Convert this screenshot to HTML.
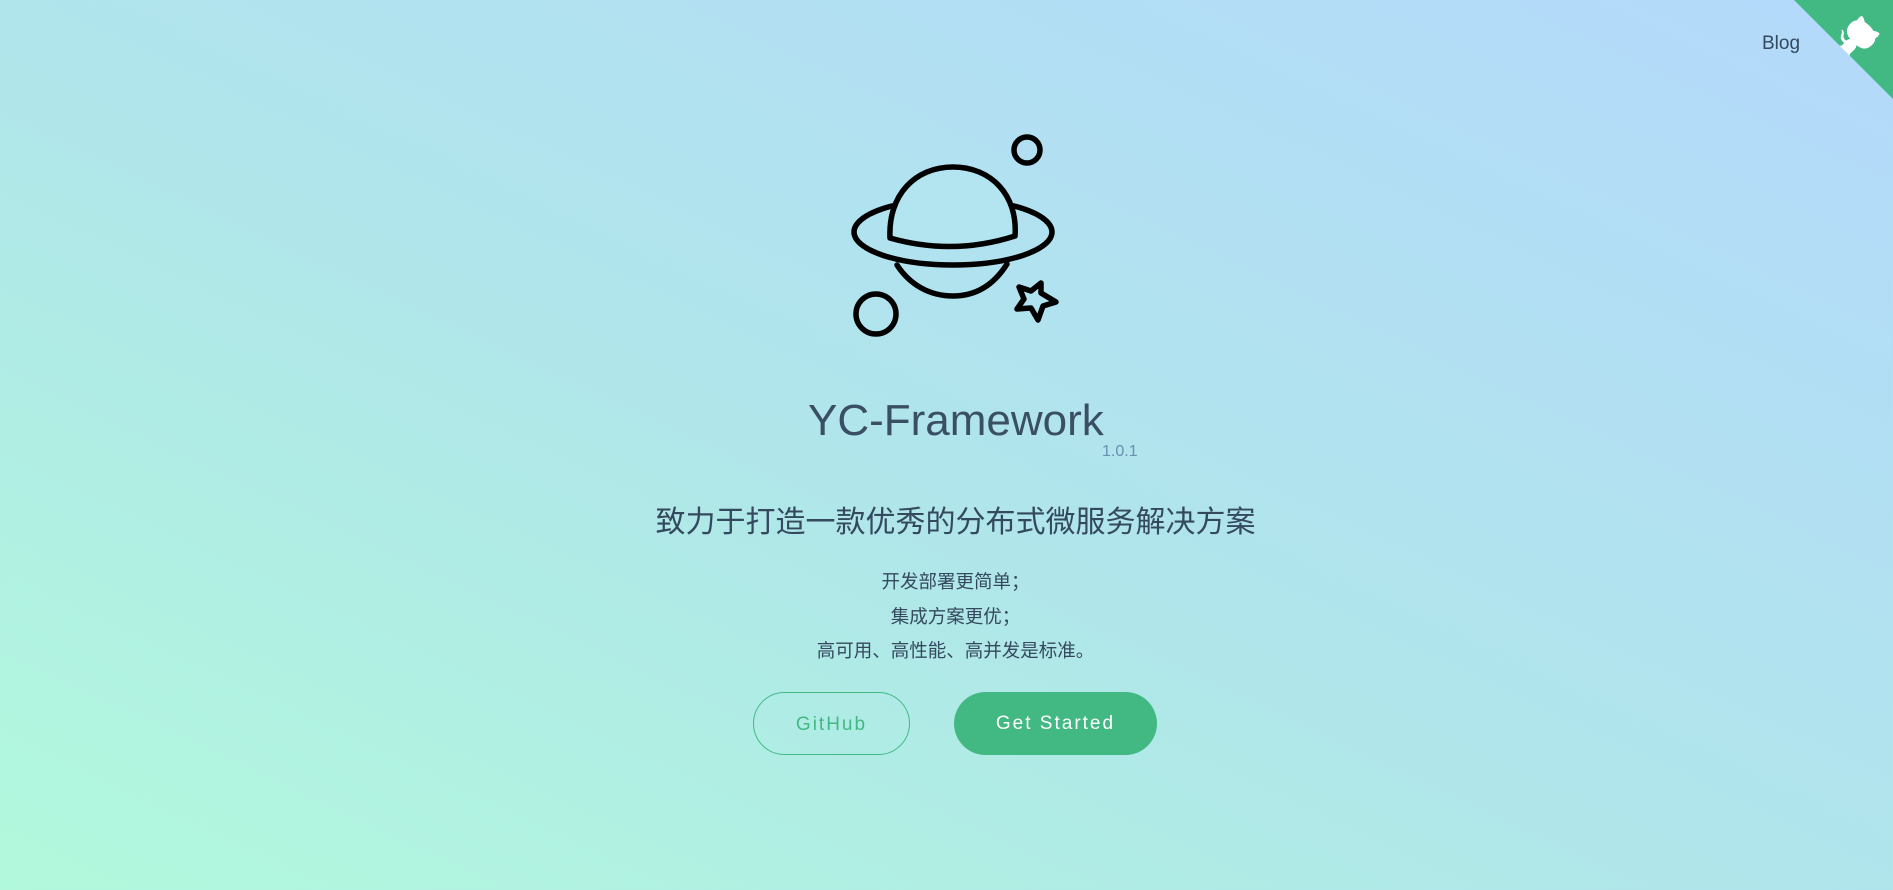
<!DOCTYPE html>
<html><head><meta charset="utf-8"><style>
html,body{margin:0;padding:0;width:1893px;height:890px;overflow:hidden}
body{background:linear-gradient(to top right,#b1f9dc 0%,#b0e6ea 45%,#b4d9fc 100%);font-family:"Liberation Sans","Noto Sans CJK SC",sans-serif;color:#34495e;position:relative}
.a{position:absolute;white-space:nowrap}
.c{left:9px;width:1893px;text-align:center}
.btn{position:absolute;top:692px;height:63px;border-radius:32px;box-sizing:border-box;font-size:19px;letter-spacing:2px;line-height:63px;text-align:center}
</style></head><body>
<svg class="a" style="left:0;top:0" width="1893" height="890">
<g fill="none" stroke="#000" stroke-width="5.5" stroke-linejoin="round" stroke-linecap="round">
<circle cx="1027" cy="150" r="13"/>
<circle cx="876" cy="314" r="20"/>
<ellipse cx="953" cy="232" rx="99" ry="33"/>
<path d="M890,238 C888,195 915,167 953,167 C991,167 1018,195 1015,236 Q953,256 890,238 Z" fill="#b2e5ef"/>
<path d="M897,265 C910,285 930,296 953,296 C978,296 995,283 1007,264"/>
<path d="M1041,283 L1041,293 L1056,302 L1043,306 L1038,320 L1031,308 L1017,309 L1024,299 L1019,287 L1031,291 Z"/>
</g>
</svg>
<svg class="a" style="right:0;top:0;color:#fff" width="99" height="99" viewBox="0 0 250 250">
<path d="M0,0 L115,115 L130,115 L142,142 L250,250 L250,0 Z" fill="#42b983"/>
<path d="M128.3,109.0 C113.8,99.7 119.0,89.6 119.0,89.6 C122.0,82.7 120.5,78.6 120.5,78.6 C119.2,72.0 123.4,76.3 123.4,76.3 C127.3,80.9 125.5,87.3 125.5,87.3 C122.9,97.6 130.6,101.9 134.4,103.2" fill="currentColor"/>
<path d="M115.0,115.0 C114.9,115.1 118.7,116.5 119.8,115.4 L133.7,101.6 C136.9,99.2 139.9,98.4 142.2,98.6 C133.8,88.0 127.5,74.4 143.8,58.0 C148.5,53.4 154.0,51.2 159.7,51.0 C160.3,49.4 163.2,43.6 171.4,40.1 C171.4,40.1 176.1,42.5 178.8,56.2 C183.1,58.6 187.2,61.8 190.9,65.4 C194.5,69.0 197.7,73.2 200.1,77.6 C213.8,80.2 216.3,84.9 216.3,84.9 C212.7,93.1 206.9,96.0 205.4,96.6 C205.1,102.4 203.0,107.8 198.3,112.5 C181.9,128.9 168.3,122.5 157.7,114.1 C157.9,116.9 156.7,120.9 152.7,124.9 L141.0,136.5 C139.8,137.7 141.6,141.9 141.8,141.8 Z" fill="currentColor"/>
</svg>
<div class="a" style="left:1762px;top:33px;font-size:19px">Blog</div>
<div class="a" style="left:808px;top:396px;font-size:44px;color:#3a4f63">YC-Framework</div>
<div class="a" style="left:1102px;top:443px;font-size:16px;color:#6a8fb0">1.0.1</div>
<div class="a c" style="top:497px;font-size:30px">致力于打造一款优秀的分布式微服务解决方案</div>
<div class="a c" style="top:565px;font-size:18.5px;line-height:34.5px">开发部署更简单；<br>集成方案更优；<br>高可用、高性能、高并发是标准。</div>
<div class="btn" style="left:753px;width:157px;border:1px solid #42b983;color:#42b983">GitHub</div>
<div class="btn" style="left:954px;width:203px;background:#42b983;color:#fff">Get Started</div>
</body></html>
